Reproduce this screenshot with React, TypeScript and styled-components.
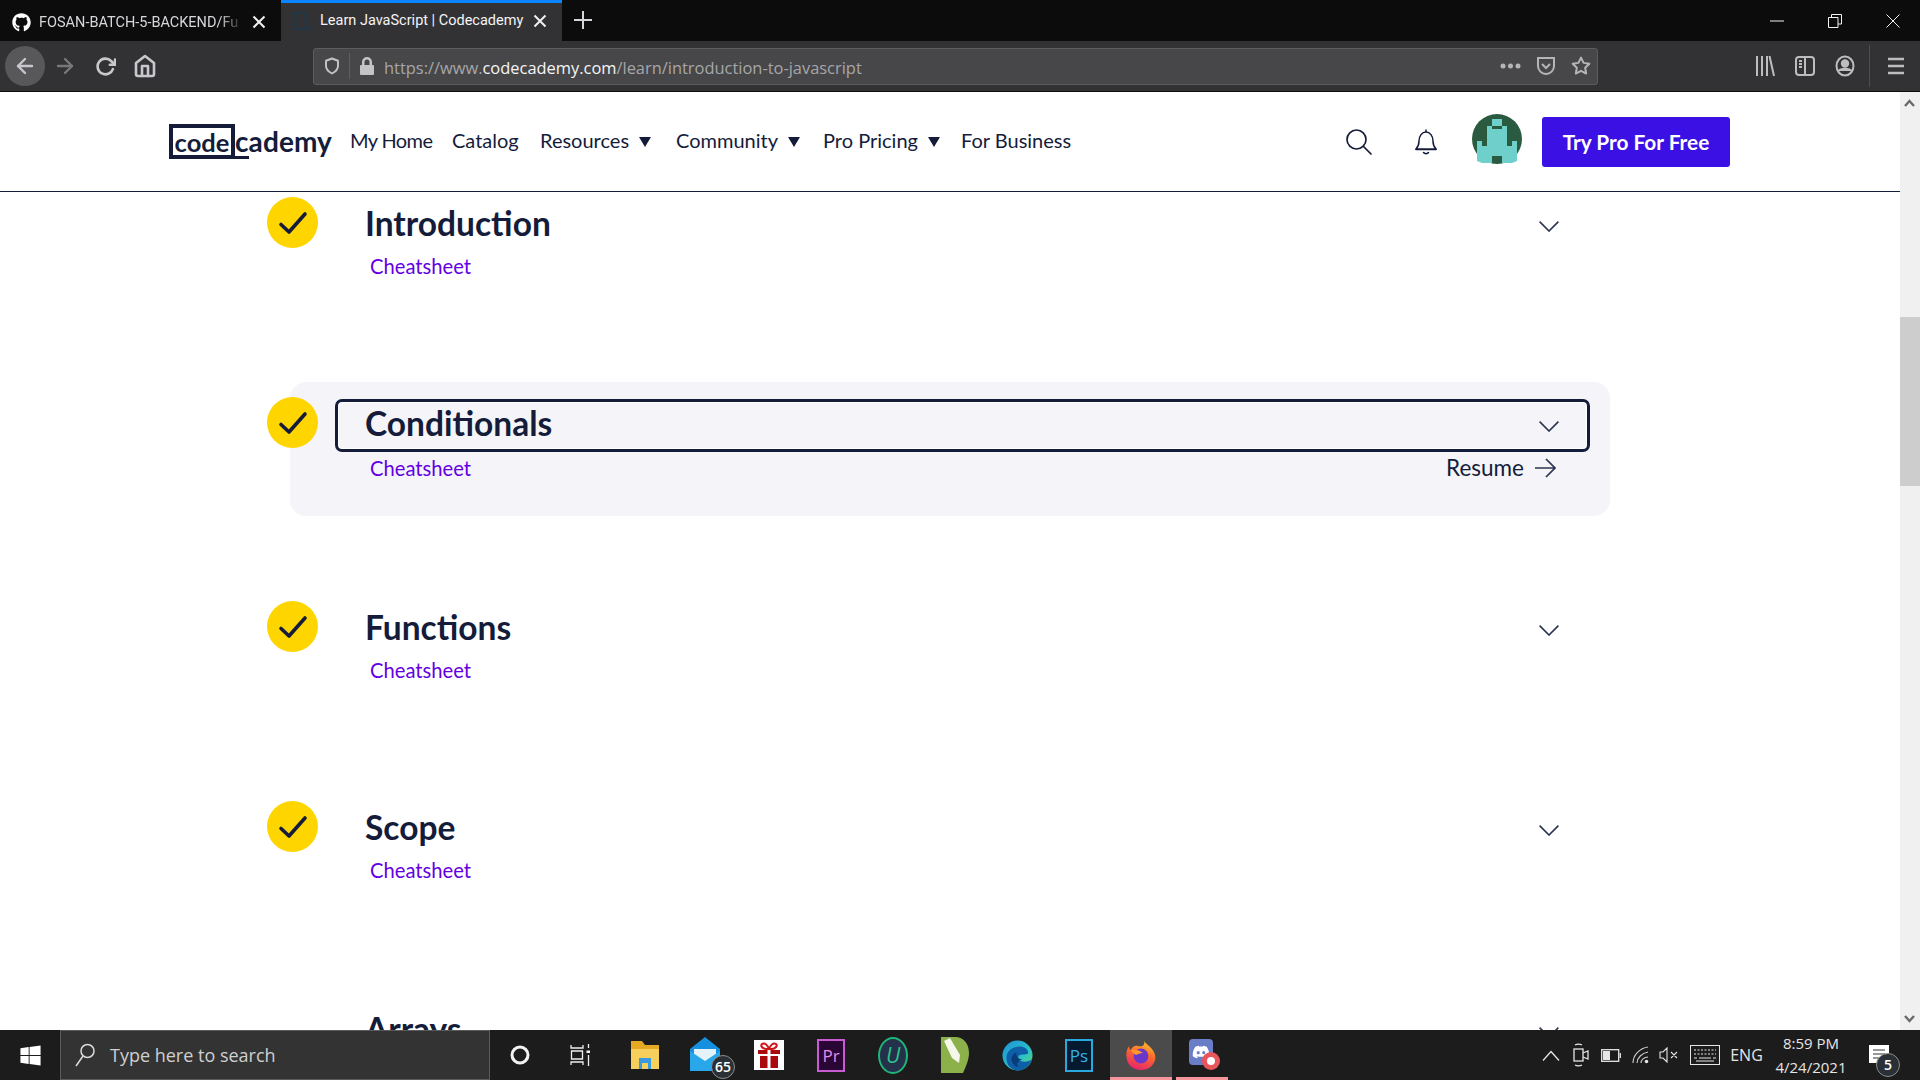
import React from 'react';
import styled, { createGlobalStyle } from 'styled-components';
import { FaGithub, FaDiscord, FaWindows } from 'react-icons/fa';
import { FiShield, FiHome, FiRotateCw, FiArrowLeft, FiArrowRight, FiStar } from 'react-icons/fi';

const GlobalStyle = createGlobalStyle`
  html, body { margin: 0; padding: 0; height: 100%; overflow: hidden; }
  #root { height: 100%; }
  * { box-sizing: border-box; }
`;

const ink = '#141c3a';
const uiFont = `"Open Sans", "Liberation Sans", sans-serif`;
const pageFont = `Lato, "Open Sans", sans-serif`;

const Screen = styled.div`
  width: 1920px;
  height: 1080px;
  display: flex;
  flex-direction: column;
  overflow: hidden;
  background: #fff;
`;

/* browser chrome */
const TabBar = styled.div`
  height: 41px;
  background: #0c0c0d;
  display: flex;
  align-items: stretch;
  flex: none;
  color: #d7d7db;
  font: 400 14.5px Roboto, ${uiFont};
`;

const Tab = styled.div<{ $active?: boolean }>`
  width: 281px;
  display: flex;
  align-items: center;
  background: ${p => (p.$active ? '#323234' : 'transparent')};
  border-top: 3px solid ${p => (p.$active ? '#0a84ff' : 'transparent')};
  padding: ${p => (p.$active ? '0 15px 3px 12px' : '3px 15px 3px 12px')};
  gap: 8px;
  color: ${p => (p.$active ? '#f4f4f6' : '#d7d7db')};
`;

const TabTitle = styled.span<{ $fade?: boolean }>`
  flex: 1;
  min-width: 0;
  white-space: nowrap;
  ${p => p.$fade && 'mask-image: linear-gradient(90deg, #000 88%, transparent);'}
`;

const TabClose = styled.svg`
  width: 14px;
  height: 14px;
  flex: none;
  stroke: #f0f0f2;
  stroke-width: 2;
`;

const NewTab = styled.svg`
  width: 20px;
  height: 20px;
  margin: 10px 0 0 11px;
  stroke: #d7d7db;
  stroke-width: 2;
`;

const WindowControls = styled.div`
  margin-left: auto;
  display: flex;
  align-items: center;
  padding-right: 20px;
  gap: 44px;
`;

const ToolBar = styled.div`
  height: 51px;
  background: #323234;
  border-bottom: 1px solid #0c0c0d;
  display: flex;
  align-items: center;
  flex: none;
  color: #c8c8cc;
`;

const NavButton = styled.div<{ $round?: boolean; $dim?: boolean; $size?: number }>`
  width: 40px;
  height: 40px;
  display: flex;
  align-items: center;
  justify-content: center;
  border-radius: 50%;
  background: ${p => (p.$round ? '#58585a' : 'transparent')};
  color: ${p => (p.$dim ? '#77777a' : '#c8c8cc')};
  font-size: ${p => p.$size ?? 24}px;
`;

const NavButtons = styled.div`
  display: flex;
  padding-left: 5px;
  width: 313px;
  flex: none;
`;

const UrlBar = styled.div`
  width: 1285px;
  height: 37px;
  background: #474749;
  border: 1px solid #5c5c5e;
  border-radius: 3px;
  display: flex;
  align-items: center;
  padding-left: 9px;
  flex: none;
  font: 400 16.43px ${uiFont};
  color: #a6a6a8;
`;

const UrlDivider = styled.span`
  width: 1px;
  height: 26px;
  background: #5f5f61;
  margin: 0 9px 0 8px;
`;

const UrlHost = styled.span`
  color: #f5f5f7;
`;

const UrlText = styled.span`
  margin: 2px 0 0 9px;
  white-space: nowrap;
`;

const UrlActions = styled.div`
  margin-left: auto;
  display: flex;
  align-items: center;
  gap: 15px;
  padding-right: 6px;
`;

const ToolIcons = styled.div`
  display: flex;
  align-items: center;
  margin-left: auto;
  padding-right: 16px;
  color: #bdbdc0;
`;

const ToolDivider = styled.span`
  width: 1px;
  height: 42px;
  background: #4e4e50;
  margin: 0 18px 0 4px;
`;

const IconSlot = styled.span`
  width: 40px;
  display: flex;
  justify-content: center;
`;

/* site header */
const Page = styled.div`
  flex: 1;
  min-height: 0;
  display: flex;
`;

const Content = styled.div`
  flex: 1;
  min-width: 0;
  display: flex;
  flex-direction: column;
  overflow: hidden;
`;

const Header = styled.header`
  height: 100px;
  flex: none;
  background: #fff;
  border-bottom: 1px solid ${ink};
  display: flex;
  align-items: center;
  padding: 0 170px 0 169px;
  position: relative;
  z-index: 2;
  font: 400 20px ${pageFont};
  color: ${ink};
`;

const HeaderLabel = styled.span<{ $tight?: boolean }>`
  margin-top: -4px;
  ${p => p.$tight && 'letter-spacing: -0.6px;'}
`;

const Logo = styled.div`
  width: 181px;
  flex: none;
  display: flex;
  align-items: center;
  font: 700 28px ${pageFont};
  color: ${ink};
`;

const LogoBox = styled.span`
  border: 4px solid ${ink};
  height: 35px;
  width: 66px;
  display: flex;
  align-items: center;
  justify-content: center;
  font-size: 25.500px;
`;

const LogoRest = styled.span`
  letter-spacing: 0.1px;
`;

const LogoC = styled.span`
  border-bottom: 3px solid ${ink};
  line-height: 30px;
  display: inline-block;
`;

const NavLink = styled.span<{ $w: number }>`
  width: ${p => p.$w}px;
  flex: none;
  display: flex;
  align-items: center;
  gap: 10px;
  white-space: nowrap;
`;

const Caret = styled.span`
  width: 0;
  height: 0;
  border-left: 6.5px solid transparent;
  border-right: 6.5px solid transparent;
  border-top: 10px solid ${ink};
`;

const HeaderRight = styled.div`
  margin-left: auto;
  display: flex;
  align-items: center;
`;

const Avatar = styled.svg`
  width: 50px;
  height: 50px;
  margin: -6px 20px 0 0;
`;

const HeaderIcon = styled.span<{ $w: number }>`
  width: ${p => p.$w}px;
  display: flex;
`;

const TryButton = styled.button`
  width: 188px;
  height: 50px;
  margin-top: 1px;
  padding-bottom: 3px;
  border: 0;
  border-radius: 3px;
  background: #3a10e5;
  color: #fff;
  font: 700 20.8px ${pageFont};
`;

/* course sections */
const SectionList = styled.main`
  margin-top: -10px;
  display: flex;
  flex-direction: column;
`;

const Section = styled.section<{ $active?: boolean; $after: number }>`
  width: 1320px;
  height: 134px;
  flex: none;
  margin: 0 0 ${p => p.$after}px 290px;
  padding-top: 15px;
  border-radius: 16px;
  background: ${p => (p.$active ? '#f4f4f9' : 'transparent')};
`;

const SectionHead = styled.div`
  display: flex;
  align-items: flex-start;
`;

const CheckBadge = styled.span<{ $empty?: boolean }>`
  width: 51px;
  height: 51px;
  flex: none;
  margin-left: -23px;
  border-radius: 50%;
  background: ${p => (p.$empty ? 'transparent' : '#ffd500')};
  display: flex;
  align-items: center;
  justify-content: center;
`;

const TitleBox = styled.div<{ $focused?: boolean }>`
  width: 1255px;
  height: 53px;
  margin: 2px 0 0 17px;
  padding: 0 28px 0 27px;
  border: 3px solid ${p => (p.$focused ? ink : 'transparent')};
  border-radius: 7px;
  box-shadow: ${p => (p.$focused ? 'inset 0 0 0 1px #fff' : 'none')};
  display: flex;
  align-items: center;
  justify-content: space-between;
`;

const SectionTitle = styled.h2`
  margin: 0;
  padding-bottom: 5px;
  font: 700 33.5px ${pageFont};
  color: ${ink};
`;

const SectionFoot = styled.div`
  display: flex;
  align-items: center;
  justify-content: space-between;
  padding: 2px 54px 0 80px;
`;

const CheatLink = styled.a`
  font: 400 20.2px ${pageFont};
  color: #6400e4;
`;

const Resume = styled.span`
  display: flex;
  align-items: center;
  gap: 11px;
  font: 400 22.5px ${pageFont};
  color: ${ink};
`;

const ChevronSvg = styled.svg`
  width: 20px;
  height: 11px;
  margin-top: 2px;
  fill: none;
  stroke: #2c3350;
  stroke-width: 1.6;
`;

/* scrollbar */
const ScrollTrack = styled.div`
  width: 20px;
  flex: none;
  background: #f0f0f0;
  display: flex;
  flex-direction: column;
  align-items: center;
  padding-top: 225px;
  position: relative;
`;

const ScrollThumb = styled.div`
  width: 20px;
  height: 169px;
  background: #cdcdcd;
`;

const ScrollArrow = styled.svg<{ $top?: boolean }>`
  position: absolute;
  left: 4px;
  ${p => (p.$top ? 'top: 7px;' : 'bottom: 7px;')}
  width: 11px;
  height: 8px;
  fill: none;
  stroke: #6a6a6a;
  stroke-width: 2.4;
`;

/* windows taskbar */
const TaskBar = styled.footer`
  height: 50px;
  flex: none;
  background: #1c1c1c;
  display: flex;
  align-items: stretch;
  color: #e8e8e8;
  font: 400 16px ${uiFont};
  position: relative;
  z-index: 3;
`;

const StartButton = styled.div`
  width: 60px;
  display: flex;
  align-items: center;
  justify-content: center;
  font-size: 23px;
  color: #fff;
`;

const SearchBox = styled.div`
  width: 430px;
  background: #333;
  border: 1px solid #5a5a5a;
  display: flex;
  align-items: center;
  gap: 15px;
  padding-left: 14px;
  font-size: 18px;
  color: #cfcfcf;
`;

const TaskSlot = styled.div<{ $active?: boolean; $open?: boolean }>`
  width: 62px;
  position: relative;
  display: flex;
  align-items: center;
  justify-content: center;
  background: ${p => (p.$active ? '#4b4b4b' : 'transparent')};
  ${p => p.$open && `
    &::after {
      content: '';
      position: absolute;
      left: ${p.$active ? 0 : 4}px;
      right: ${p.$active ? 0 : 6}px;
      bottom: 0;
      height: 3px;
      background: #f6959c;
    }
  `}
`;

const CountBadge = styled.span<{ $right: number; $bottom: number }>`
  position: absolute;
  right: ${p => p.$right}px;
  bottom: ${p => p.$bottom}px;
  width: 24px;
  height: 24px;
  border-radius: 50%;
  background: #2a3036;
  border: 1px solid #8d8d8d;
  color: #fff;
  font: 600 14px/22px ${uiFont};
  text-align: center;
`;

const GiftTile = styled.span`
  width: 30px;
  height: 30px;
  background: #fff;
  display: flex;
  align-items: center;
  justify-content: center;
`;

const AdobeTile = styled.span<{ $edge: string; $fill: string; $text: string }>`
  width: 28px;
  height: 33px;
  border: 2px solid ${p => p.$edge};
  background: ${p => p.$fill};
  color: ${p => p.$text};
  font: 400 17px/29px ${uiFont};
  text-align: center;
`;

const UltraRing = styled.span`
  width: 30px;
  height: 37px;
  border: 2px solid #1fb67a;
  border-radius: 50%;
  background: #25304a;
  color: #2cc48a;
  font: italic 400 21px/32px ${uiFont};
  text-align: center;
`;

const Tray = styled.div`
  margin-left: auto;
  display: flex;
  align-items: center;
  color: #e6e6e6;
`;

const TraySlot = styled.span<{ $w: number }>`
  width: ${p => p.$w}px;
  display: flex;
  justify-content: center;
`;

const Clock = styled.div`
  width: 96px;
  text-align: center;
  font-size: 15px;
  line-height: 24px;
  margin-left: -4px;
`;

const Notify = styled.div`
  width: 61px;
  height: 50px;
  position: relative;
  padding: 15px 0 0 10px;
`;

const Chevron = () => (
  <ChevronSvg viewBox="0 0 20 11">
    <path d="M.6.6 10 10 19.4.6" />
  </ChevronSvg>
);

const Check = () => (
  <svg width="30" height="24" viewBox="0 0 30 24" fill="none" stroke={ink} strokeWidth="3.6" strokeLinecap="round" strokeLinejoin="round">
    <path d="M3 13.5 11 21 27 3" />
  </svg>
);

const X = () => (
  <TabClose viewBox="0 0 14 14">
    <path d="M1.5 1.5 12.5 12.5M12.5 1.5 1.5 12.5" />
  </TabClose>
);

const FirefoxIcon = () => (
  <svg width="30" height="32" viewBox="0 0 30 32">
    <defs>
      <linearGradient id="ff" x1="0.7" y1="0" x2="0.35" y2="1">
        <stop offset="0" stopColor="#ffcb2f" />
        <stop offset="0.45" stopColor="#ff6a2b" />
        <stop offset="1" stopColor="#e5246d" />
      </linearGradient>
    </defs>
    <path d="M18 1c1 4 5 5 8 9 3 4 4 8 3 11-2 7-8 10-14 10C7 31 1 26 .5 18-.1 14 1 10 3 7c0 2 .5 3 1.5 4C6 8 9 6 12 7c3 1 8 0 6-6z" fill="url(#ff)" />
    <circle cx="15" cy="17" r="7.4" fill="#6a37c9" />
    <path d="M5 11c4-1 9 0 12 3-3 0-5 1-7 2-2-1-4-3-5-5z" fill="#ff9a2a" />
  </svg>
);

const EdgeIcon = () => (
  <svg width="31" height="31" viewBox="0 0 32 32">
    <defs>
      <linearGradient id="eg" x1="0" y1="0" x2="1" y2="1">
        <stop offset="0" stopColor="#1c8fd6" />
        <stop offset="0.6" stopColor="#2bc2c8" />
        <stop offset="1" stopColor="#66d764" />
      </linearGradient>
    </defs>
    <circle cx="16" cy="16" r="15.5" fill="url(#eg)" />
    <path d="M31 19c-2 3-7 4-11 3-3-1-4-3-3-5 1-3 7-1 10-3 0-6-6-8-11-7C8 8 3 14 5 22c1 5 5 9 11 9.500 7 0 13-5 15-12.500z" fill="#0f5ea8" />
    <path d="M21 20c-4 0-7-3-6-7-4 1-6 5-5 9 1 3 4 6 8 6-1 0-6-5 3-8z" fill="#0a3d78" />
  </svg>
);

const Dots = () => (
  <svg width="21" height="6" viewBox="0 0 21 6" fill="#b5b5b8">
    <circle cx="3" cy="3" r="2.500" />
    <circle cx="10.500" cy="3" r="2.500" />
    <circle cx="18" cy="3" r="2.500" />
  </svg>
);

export default function App() {
  return (
    <Screen>
      <GlobalStyle />
      <TabBar>
        <Tab>
          <FaGithub size={19} color="#fff" style={{ flex: 'none' }} />
          <TabTitle $fade>FOSAN-BATCH-5-BACKEND/Fu</TabTitle>
          <X />
        </Tab>
        <Tab $active>
          <svg width="19" height="18" viewBox="0 0 19 18" fill="none" stroke="#123a58" strokeWidth="1.2" style={{ flex: 'none' }}>
            <path d="M1 1h13v16H1z" />
            <path d="M15 16h3" />
          </svg>
          <TabTitle>Learn JavaScript | Codecademy</TabTitle>
          <X />
        </Tab>
        <NewTab viewBox="0 0 20 20">
          <path d="M10 1v18M1 10h18" />
        </NewTab>
        <WindowControls>
          <svg width="14" height="2" viewBox="0 0 14 2"><path d="M0 1h14" stroke="#f2f2f2" /></svg>
          <svg width="14" height="14" viewBox="0 0 14 14" fill="none" stroke="#f2f2f2"><path d="M.5 3.500h9.500v10H.5zM3.500 3.500V.5h10v9.500H10" /></svg>
          <svg width="14" height="14" viewBox="0 0 14 14" fill="none" stroke="#f2f2f2"><path d="M.5.5l13 13M13.500.5l-13 13" /></svg>
        </WindowControls>
      </TabBar>

      <ToolBar>
        <NavButtons>
          <NavButton $round><FiArrowLeft strokeWidth={2.4} /></NavButton>
          <NavButton $dim><FiArrowRight strokeWidth={2.4} /></NavButton>
          <NavButton $size={21}><FiRotateCw strokeWidth={3} /></NavButton>
          <NavButton><FiHome strokeWidth={2.6} /></NavButton>
        </NavButtons>
        <UrlBar>
          <FiShield size={18} color="#c4c4c6" strokeWidth={2.6} />
          <UrlDivider />
          <svg width="16" height="18" viewBox="0 0 16 18" fill="#c4c4c6">
            <path d="M3 8V5a5 5 0 0 1 10 0v3h1a1 1 0 0 1 1 1v8a1 1 0 0 1-1 1H2a1 1 0 0 1-1-1V9a1 1 0 0 1 1-1zm2.500 0h5V5a2.500 2.500 0 0 0-5 0z" />
          </svg>
          <UrlText>
            https://www.<UrlHost>codecademy.com</UrlHost>/learn/introduction-to-javascript
          </UrlText>
          <UrlActions>
            <Dots />
            <svg width="20" height="20" viewBox="0 0 20 20" fill="none" stroke="#b5b5b8" strokeWidth="2">
              <path d="M2 2h16v8a8 8 0 0 1-16 0z" />
              <path d="M6 8l4 4 4-4" />
            </svg>
            <FiStar size={20} color="#b5b5b8" strokeWidth={2.4} />
          </UrlActions>
        </UrlBar>
        <ToolIcons>
          <IconSlot>
            <svg width="20" height="22" viewBox="0 0 20 22" stroke="#bdbdc0" strokeWidth="2" fill="none">
              <path d="M2 1v20M7 1v20M12 1v20M14.500 1l4.500 20" />
            </svg>
          </IconSlot>
          <IconSlot>
            <svg width="20" height="20" viewBox="0 0 20 20" fill="none" stroke="#bdbdc0" strokeWidth="2">
              <rect x="1" y="1" width="18" height="18" rx="3" />
              <path d="M10 1v18M4 5h3M4 8h3M4 11h3" />
            </svg>
          </IconSlot>
          <IconSlot>
            <svg width="20" height="22" viewBox="0 0 20 22" fill="none" stroke="#bdbdc0" strokeWidth="2">
              <ellipse cx="10" cy="11" rx="8.500" ry="9.500" />
              <circle cx="10" cy="8.500" r="3.200" fill="#bdbdc0" />
              <path d="M3.500 16c2-3 11-3 13 0" fill="#bdbdc0" />
            </svg>
          </IconSlot>
          <ToolDivider />
          <svg width="16" height="18" viewBox="0 0 16 18" stroke="#bdbdc0" strokeWidth="2.500">
            <path d="M0 2h16M0 9h16M0 16h16" />
          </svg>
        </ToolIcons>
      </ToolBar>

      <Page>
        <Content>
          <Header>
            <Logo>
              <LogoBox>code</LogoBox>
              <LogoRest><LogoC>c</LogoC>ademy</LogoRest>
            </Logo>
            <NavLink $w={102}><HeaderLabel $tight>My Home</HeaderLabel></NavLink>
            <NavLink $w={88}><HeaderLabel>Catalog</HeaderLabel></NavLink>
            <NavLink $w={136}><HeaderLabel>Resources</HeaderLabel> <Caret /></NavLink>
            <NavLink $w={147}><HeaderLabel>Community</HeaderLabel> <Caret /></NavLink>
            <NavLink $w={138}><HeaderLabel>Pro Pricing</HeaderLabel> <Caret /></NavLink>
            <NavLink $w={110}><HeaderLabel>For Business</HeaderLabel></NavLink>
            <HeaderRight>
              <HeaderIcon $w={69}>
                <svg width="26" height="26" viewBox="0 0 26 26" fill="none" stroke={ink} strokeWidth="1.700" strokeLinecap="round">
                  <circle cx="10.500" cy="10.500" r="9.500" />
                  <path d="M17.500 17.500 25 25" />
                </svg>
              </HeaderIcon>
              <HeaderIcon $w={57}>
                <svg width="22" height="26" viewBox="0 0 22 26" fill="none" stroke={ink} strokeWidth="1.500" strokeLinecap="round">
                  <path d="M11 1v2M4 12c0-5 3-9 7-9s7 4 7 9c0 4 1 6 3 8H1c2-2 3-4 3-8zM1 20.500h20" />
                  <path d="M8.500 23.500c1 1.500 4 1.500 5 0" />
                </svg>
              </HeaderIcon>
              <Avatar viewBox="0 0 50 50">
                <circle cx="25" cy="25" r="25" fill="#2a5a3f" />
                <path
                  fill="#6ecfcb"
                  d="M20 5h10v7H20zM15 12h5v3h10v-3h5v20h5v-5h5v20l-5 2H30v-7H20v7H10l-5-2V27h5v5h5z"
                />
              </Avatar>
              <TryButton>Try Pro For Free</TryButton>
            </HeaderRight>
          </Header>

          <SectionList>
            <Section $after={66}>
              <SectionHead>
                <CheckBadge><Check /></CheckBadge>
                <TitleBox>
                  <SectionTitle>Introduction</SectionTitle>
                  <Chevron />
                </TitleBox>
              </SectionHead>
              <SectionFoot><CheatLink>Cheatsheet</CheatLink></SectionFoot>
            </Section>

            <Section $active $after={70}>
              <SectionHead>
                <CheckBadge><Check /></CheckBadge>
                <TitleBox $focused>
                  <SectionTitle>Conditionals</SectionTitle>
                  <Chevron />
                </TitleBox>
              </SectionHead>
              <SectionFoot>
                <CheatLink>Cheatsheet</CheatLink>
                <Resume>
                  Resume
                  <svg width="21" height="20" viewBox="0 0 21 20" fill="none" stroke="#2c3350" strokeWidth="1.7">
                    <path d="M0 10h20M11 1l9 9-9 9" />
                  </svg>
                </Resume>
              </SectionFoot>
            </Section>

            <Section $after={66}>
              <SectionHead>
                <CheckBadge><Check /></CheckBadge>
                <TitleBox>
                  <SectionTitle>Functions</SectionTitle>
                  <Chevron />
                </TitleBox>
              </SectionHead>
              <SectionFoot><CheatLink>Cheatsheet</CheatLink></SectionFoot>
            </Section>

            <Section $after={68}>
              <SectionHead>
                <CheckBadge><Check /></CheckBadge>
                <TitleBox>
                  <SectionTitle>Scope</SectionTitle>
                  <Chevron />
                </TitleBox>
              </SectionHead>
              <SectionFoot><CheatLink>Cheatsheet</CheatLink></SectionFoot>
            </Section>

            <Section $after={66}>
              <SectionHead>
                <CheckBadge $empty />
                <TitleBox>
                  <SectionTitle>Arrays</SectionTitle>
                  <Chevron />
                </TitleBox>
              </SectionHead>
            </Section>
          </SectionList>
        </Content>

        <ScrollTrack>
          <ScrollArrow $top viewBox="0 0 11 8"><path d="M1 7l4.500-5L10 7" /></ScrollArrow>
          <ScrollThumb />
          <ScrollArrow viewBox="0 0 11 8"><path d="M1 1l4.500 5L10 1" /></ScrollArrow>
        </ScrollTrack>
      </Page>

      <TaskBar>
        <StartButton><FaWindows /></StartButton>
        <SearchBox>
          <svg width="20" height="24" viewBox="0 0 20 24" fill="none" stroke="#dcdcdc" strokeWidth="1.500">
            <circle cx="12.500" cy="8" r="6.500" />
            <path d="M8 13 1 23" />
          </svg>
          Type here to search
        </SearchBox>
        <TaskSlot>
          <svg width="20" height="20" viewBox="0 0 20 20" fill="none" stroke="#f2f2f2" strokeWidth="3" style={{ marginRight: 2 }}>
            <circle cx="10" cy="10" r="8" />
          </svg>
        </TaskSlot>
        <TaskSlot>
          <svg width="20" height="22" viewBox="0 0 20 22" fill="none" stroke="#efefef" strokeWidth="1.300" style={{ marginRight: 6 }}>
            <path d="M1 1v3h12V1M1.500 7h11v8h-11zM1 21v-3h12v3M18.500 0v4M18.500 11v11" />
            <rect x="16.500" y="6.500" width="4" height="2.500" fill="#efefef" stroke="none" />
          </svg>
        </TaskSlot>
        <TaskSlot>
          <svg width="30" height="28" viewBox="0 0 30 28">
            <path d="M1 0h11l3 4h14v24H1z" fill="#e5a924" />
            <path d="M1 8h28v20H1z" fill="#f6cf5d" />
            <path d="M9 17h12v11h-3v-6h-6v6H9z" fill="#3a9ae0" />
          </svg>
        </TaskSlot>
        <TaskSlot>
          <svg width="30" height="34" viewBox="0 0 30 34" style={{ marginRight: 4, marginTop: -2 }}>
            <path d="M15 0 30 12v22H0V12z" fill="#1490df" />
            <path d="M4 12h22v8l-11 7-11-7z" fill="#e6f2fa" />
            <path d="M0 14l15 10 15-10v20H0z" fill="#28a8ea" />
          </svg>
          <CountBadge $right={3} $bottom={1}>65</CountBadge>
        </TaskSlot>
        <TaskSlot>
          <GiftTile>
            <svg width="22" height="26" viewBox="0 0 22 26">
              <path d="M4 2c3-2 6 2 7 5 1-3 4-7 7-5 2 2-1 5-4 5H8C5 7 2 4 4 2z" fill="none" stroke="#d21318" strokeWidth="2" />
              <path d="M0 8h22v4H0zM2 14h18v12H2z" fill="#a90a0e" />
              <path d="M9.500 8h3v18h-3z" fill="#fff" />
            </svg>
          </GiftTile>
        </TaskSlot>
        <TaskSlot>
          <AdobeTile $edge="#c95ad6" $fill="#2a0634" $text="#e08ce8">Pr</AdobeTile>
        </TaskSlot>
        <TaskSlot>
          <UltraRing>U</UltraRing>
        </TaskSlot>
        <TaskSlot>
          <svg width="28" height="36" viewBox="0 0 28 36">
            <path d="M0 0h14c9 0 14 7 14 16 0 7-3 13-6 20H0z" fill="#8cb04a" />
            <path d="M3 4l6-3 10 17-1 8-7-5z" fill="#f4f7ea" />
          </svg>
        </TaskSlot>
        <TaskSlot><EdgeIcon /></TaskSlot>
        <TaskSlot>
          <AdobeTile $edge="#29a9e0" $fill="#051a2e" $text="#35b0ea">Ps</AdobeTile>
        </TaskSlot>
        <TaskSlot $active $open><FirefoxIcon /></TaskSlot>
        <TaskSlot $open>
          <FaDiscord size={24} color="#fff" style={{ background: '#6a7ec8', borderRadius: 4, padding: 3, width: 24, height: 26, marginRight: 4, marginTop: -6 }} />
          <svg width="18" height="18" viewBox="0 0 18 18" style={{ position: 'absolute', left: 30, top: 22 }}>
            <circle cx="9" cy="9" r="9" fill="#e8555a" />
            <circle cx="9" cy="9" r="4" fill="#fff" />
          </svg>
        </TaskSlot>

        <Tray>
          <TraySlot $w={31}>
            <svg width="18" height="11" viewBox="0 0 18 11" fill="none" stroke="#e6e6e6" strokeWidth="1.300"><path d="M1 10.500 9 1.500l8 9" /></svg>
          </TraySlot>
          <TraySlot $w={30}>
            <svg width="16" height="24" viewBox="0 0 16 24" fill="none" stroke="#e6e6e6" strokeWidth="1.300">
              <rect x="1" y="6" width="9" height="12" />
              <path d="M10 10l5-2v8l-5-2M2 2c2-1 5-1 7 0M2 22c2 1 5 1 7 0" />
            </svg>
          </TraySlot>
          <TraySlot $w={30}>
            <svg width="20" height="13" viewBox="0 0 20 13" fill="none" stroke="#e6e6e6" strokeWidth="1.300">
              <rect x=".7" y=".7" width="17" height="11.600" />
              <rect x="2" y="2" width="7" height="9" fill="#e6e6e6" stroke="none" />
              <path d="M19.300 4v5" />
            </svg>
          </TraySlot>
          <TraySlot $w={28}>
            <svg width="17" height="18" viewBox="0 0 17 18" fill="none" stroke="#d0d0d0" strokeWidth="1.100">
              <path d="M1 17C1 9 8 2 16 1M5 17c0-5 5-10 11-11M9 17c0-3 3-6 7-6" />
              <circle cx="14.500" cy="15.500" r="1.800" fill="#e6e6e6" stroke="none" />
            </svg>
          </TraySlot>
          <TraySlot $w={30}>
            <svg width="20" height="16" viewBox="0 0 20 16" fill="none" stroke="#e6e6e6" strokeWidth="1.100">
              <path d="M1 5h3l4-4v14l-4-4H1zM12 5l6 6M18 5l-6 6" />
            </svg>
          </TraySlot>
          <TraySlot $w={42}>
            <svg width="30" height="20" viewBox="0 0 30 20" fill="none" stroke="#e6e6e6" strokeWidth="1">
              <rect x=".5" y=".5" width="29" height="19" />
              <path d="M4 5h22M4 9h22" strokeDasharray="2 1.500" />
              <path d="M4 13h3M9 13h12M23 13h3M6 16h18" />
            </svg>
          </TraySlot>
          <TraySlot $w={41}>ENG</TraySlot>
          <Clock>
            8:59 PM
            <br />
            4/24/2021
          </Clock>
          <Notify>
            <svg width="20" height="18" viewBox="0 0 20 18">
              <path d="M0 0h20v18H0z" fill="#fff" />
              <path d="M4 5h12M4 9h12M4 13h12" stroke="#333" strokeWidth="1.200" />
            </svg>
            <CountBadge $right={20} $bottom={3}>5</CountBadge>
          </Notify>
        </Tray>
      </TaskBar>
    </Screen>
  );
}
